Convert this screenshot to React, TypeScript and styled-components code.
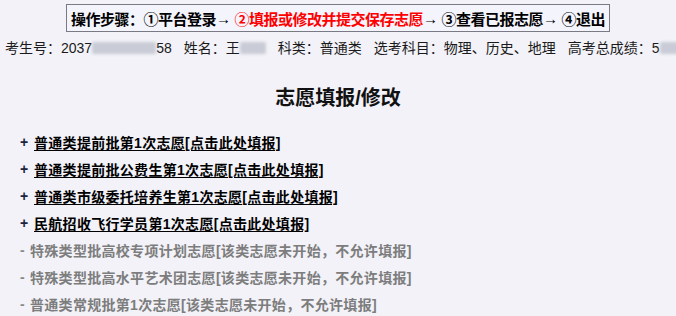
import React from 'react';
import styled, { createGlobalStyle } from 'styled-components';

const GlobalStyle = createGlobalStyle`
  html, body {
    margin: 0;
    padding: 0;
    background: #f2f2f8;
  }
  body {
    font-family: "Liberation Sans", "Noto Sans CJK SC", sans-serif;
    color: #111;
  }
`;

const Page = styled.div`
  width: 676px;
  height: 316px;
  overflow: hidden;
  padding-top: 4px;
  box-sizing: border-box;
`;

const StepsRow = styled.div`
  display: flex;
  justify-content: center;
`;

const StepsBox = styled.div`
  border: 1px solid #7a7a84;
  background: #f4f4fc;
  height: 26px;
  padding: 0 4px;
  display: flex;
  align-items: center;
  font-size: 15px;
  font-weight: bold;
  color: #000;
  white-space: nowrap;
  letter-spacing: -0.5px;
`;

const Step = styled.span<{ $active?: boolean }>`
  color: ${(p) => (p.$active ? '#ff0000' : '#000')};
`;

const Arrow = styled.span`
  font-weight: normal;
  margin-right: 4px;
`;

const InfoLine = styled.div`
  display: flex;
  gap: 12px;
  padding: 0 5px;
  margin-top: 6px;
  font-size: 14px;
  line-height: 20px;
  color: #1a1a1a;
  white-space: nowrap;
`;

const Field = styled.span``;

const Blur = styled.span<{ $w: number }>`
  display: inline-block;
  width: ${(p) => p.$w}px;
  height: 12px;
  vertical-align: -1px;
  background: #c9ccd6;
  filter: blur(1.5px);
  border-radius: 2px;
`;

const Heading = styled.h2`
  margin: 28px 0 0;
  text-align: center;
  font-size: 20px;
  line-height: 24px;
  font-weight: bold;
  color: #111;
`;

const List = styled.ul`
  list-style: none;
  margin: 22px 0 0;
  padding: 0 0 0 20px;
  display: flex;
  flex-direction: column;
  gap: 7px;
`;

const Item = styled.li<{ $disabled?: boolean }>`
  display: flex;
  align-items: center;
  height: 20px;
  font-size: 14px;
  font-weight: bold;
  letter-spacing: 0.3px;
  color: ${(p) => (p.$disabled ? '#7d7d7d' : '#000')};
  white-space: nowrap;
`;

const Mark = styled.span<{ $disabled?: boolean }>`
  width: ${(p) => (p.$disabled ? 10 : 14)}px;
  color: ${(p) => (p.$disabled ? '#8a8a8a' : '#1c2340')};
`;

const ItemLink = styled.a`
  color: #000;
  text-decoration: underline;
  text-underline-offset: 2px;
  cursor: pointer;
`;

const open = [
  '普通类提前批第1次志愿',
  '普通类提前批公费生第1次志愿',
  '普通类市级委托培养生第1次志愿',
  '民航招收飞行学员第1次志愿',
];

const closed = [
  '特殊类型批高校专项计划志愿',
  '特殊类型批高水平艺术团志愿',
  '普通类常规批第1次志愿',
];

export default function App() {
  return (
    <Page>
      <GlobalStyle />
      <StepsRow>
        <StepsBox>
          <Step>操作步骤：①平台登录</Step>
          <Arrow>→</Arrow>
          <Step $active>②填报或修改并提交保存志愿</Step>
          <Arrow>→</Arrow>
          <Step>③查看已报志愿</Step>
          <Arrow>→</Arrow>
          <Step>④退出</Step>
        </StepsBox>
      </StepsRow>
      <InfoLine>
        <Field>
          考生号：2037<Blur $w={64} />58
        </Field>
        <Field>
          姓名：王<Blur $w={26} />
        </Field>
        <Field>科类：普通类</Field>
        <Field>选考科目：物理、历史、地理</Field>
        <Field>
          高考总成绩：5<Blur $w={20} />
        </Field>
      </InfoLine>
      <Heading>志愿填报/修改</Heading>
      <List>
        {open.map((t) => (
          <Item key={t}>
            <Mark>+</Mark>
            <ItemLink>{t}[点击此处填报]</ItemLink>
          </Item>
        ))}
        {closed.map((t) => (
          <Item key={t} $disabled>
            <Mark $disabled>-</Mark>
            <span>{t}[该类志愿未开始，不允许填报]</span>
          </Item>
        ))}
      </List>
    </Page>
  );
}
